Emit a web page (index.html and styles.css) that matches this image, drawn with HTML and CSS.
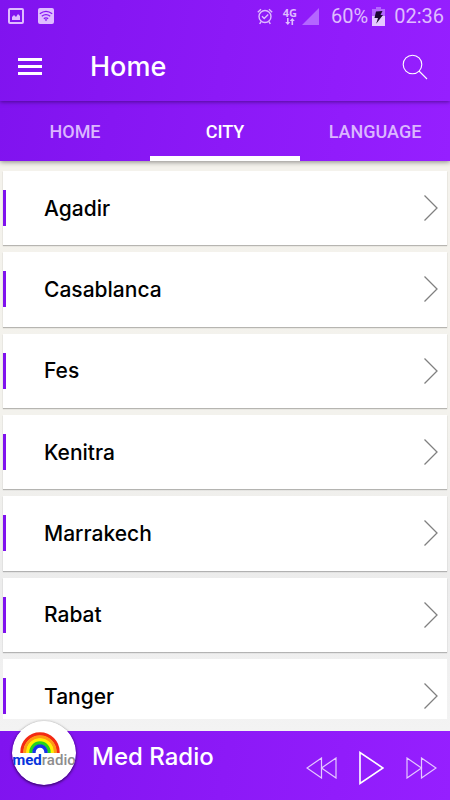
FILE: index.html
```html
<!DOCTYPE html>
<html lang="en">
<head>
<meta charset="utf-8">
<meta name="viewport" content="width=device-width, initial-scale=1">
<title>Home</title>
<link rel="stylesheet" href="styles.css">
</head>
<body>
<div class="app">
  <header class="top">
    <div class="status">
      <svg width="16" height="16" viewBox="0 0 16 16"><rect x="1" y="1" width="14" height="14" rx="1" fill="none" stroke="currentColor" stroke-width="2"/><path d="M4 12V9l2-2 2 2 2-3 2 2v4z" fill="currentColor"/></svg>
      <svg class="wifi" width="16" height="16" viewBox="0 0 16 16"><rect width="16" height="16" rx="2" fill="currentColor"/><g fill="none" stroke="#8717f5" stroke-width="1.3"><path d="M1.8 5.8Q8 1 14.2 5.8M3.8 8.3Q8 5 12.2 8.3M5.8 10.6Q8 9 10.2 10.6"/></g><path d="M6.7 11.6Q8 10.8 9.3 11.6L8 13.3z" fill="#8717f5"/></svg>
      <svg class="alarm" width="16" height="17" viewBox="0 0 16 17" fill="none" stroke="currentColor" stroke-width="1.4"><circle cx="8" cy="8.5" r="6"/><path d="M5 8.3l2.2 2.2 4-4M.8 4.2L4 1.3M15.2 4.2L12 1.3M4 13.6L2.7 16M12 13.6l1.3 2.4"/></svg>
      <span class="network"><span>4G</span><svg width="10" height="7" viewBox="0 0 10 7" fill="currentColor"><path d="M2 0h1.6v4H5.3L2.8 7 .2 4H2zM6.5 7h1.6V3h1.7L7.3 0 4.7 3h1.8z"/></svg></span>
      <svg class="signal" width="17" height="17" viewBox="0 0 17 17"><path d="M17 0v17H0z" fill="#b466ff"/></svg>
      <span class="percent">60%</span>
      <svg class="battery" width="13" height="19" viewBox="0 0 13 19"><path d="M4 0h5v2h4v7H0V2h4z" fill="#b466ff"/><path d="M0 9h13v10H0z" fill="#e5caff"/><path d="M4 4.5l6.5-.5-2 4H11l-6.8 8.8L6 11H2.5z" fill="#1c0832"/></svg>
      <span class="clock">02:36</span>
    </div>
    <div class="toolbar">
      <button class="icon-btn" aria-label="Menu"><svg width="24" height="18" viewBox="0 0 24 18" fill="currentColor"><path d="M0 0h24v3H0zM0 7h24v3H0zM0 14h24v3H0z"/></svg></button>
      <h1 class="title">Home</h1>
      <button class="icon-btn" aria-label="Search"><svg width="26" height="26" viewBox="0 0 26 26" fill="none" stroke="currentColor" stroke-width="1.1"><circle cx="10.5" cy="10.5" r="9.3"/><path d="M17 17l8 8"/></svg></button>
    </div>
  </header>
  <nav class="tabs">
    <a class="tab" href="#home">HOME</a>
    <a class="tab active" href="#city" aria-current="page">CITY</a>
    <a class="tab" href="#language">LANGUAGE</a>
  </nav>
  <main class="content">
    <ul class="cities">
      <li class="card"><a class="city" href="#agadir">Agadir<svg class="chevron" viewBox="0 0 14 26"><path d="M.5.5L13 13 .5 25.5"/></svg></a></li>
      <li class="card"><a class="city" href="#casablanca">Casablanca<svg class="chevron" viewBox="0 0 14 26"><path d="M.5.5L13 13 .5 25.5"/></svg></a></li>
      <li class="card"><a class="city" href="#fes">Fes<svg class="chevron" viewBox="0 0 14 26"><path d="M.5.5L13 13 .5 25.5"/></svg></a></li>
      <li class="card"><a class="city" href="#kenitra">Kenitra<svg class="chevron" viewBox="0 0 14 26"><path d="M.5.5L13 13 .5 25.5"/></svg></a></li>
      <li class="card"><a class="city" href="#marrakech">Marrakech<svg class="chevron" viewBox="0 0 14 26"><path d="M.5.5L13 13 .5 25.5"/></svg></a></li>
      <li class="card"><a class="city" href="#rabat">Rabat<svg class="chevron" viewBox="0 0 14 26"><path d="M.5.5L13 13 .5 25.5"/></svg></a></li>
      <li class="card"><a class="city" href="#tanger">Tanger<svg class="chevron" viewBox="0 0 14 26"><path d="M.5.5L13 13 .5 25.5"/></svg></a></li>
    </ul>
  </main>
  <footer class="player">
    <svg class="logo" width="64" height="64" viewBox="0 0 64 64" role="img" aria-label="Med Radio">
      <circle cx="32" cy="32" r="32" fill="#fff"/>
      <g fill="none" stroke-width="3.4">
        <path d="M10 32v-1a18 18 0 0 1 36 0v1" stroke="#f32a13"/>
        <path d="M13 32v-1a15 15 0 0 1 30 0v1" stroke="#ff9a12"/>
        <path d="M16 32v-1a12 12 0 0 1 24 0v1" stroke="#fff000"/>
        <path d="M19 32v-1a9 9 0 0 1 18 0v1" stroke="#20d51b"/>
        <path d="M22 32v-1a6 6 0 0 1 12 0v1" stroke="#1733e8"/>
      </g>
      <text class="logo-text" x="32" y="44" text-anchor="middle"><tspan fill="#0734dc">med</tspan><tspan class="logo-radio" fill="#8d8d8d">radio</tspan></text>
    </svg>
    <h2 class="station">Med Radio</h2>
    <div class="controls">
      <button class="icon-btn" aria-label="Previous"><svg width="31" height="22" viewBox="0 0 31 22"><path d="M15.5 1v20L1 11zM30 1v20L15.5 11z"/></svg></button>
      <button class="icon-btn" aria-label="Play"><svg class="play" width="25" height="34" viewBox="0 0 25 34"><path d="M1 1.5v31L24 17z"/></svg></button>
      <button class="icon-btn" aria-label="Next"><svg width="31" height="22" viewBox="0 0 31 22"><path d="M1 1v20l14.500-10zM15.500 1v20L30 11z"/></svg></button>
    </div>
  </footer>
</div>
</body>
</html>
```
FILE: styles.css
```css
* {
  box-sizing: border-box;
}

body {
  margin: 0;
  font-family: Inter, "Open Sans", sans-serif;
  background: #f3f3f3;
}

.app {
  display: flex;
  flex-direction: column;
  height: 100vh;
}

.top,
.tabs,
.player {
  background: linear-gradient(100deg, #8013ef, #8c19f7 50%, #961fff);
  color: #fff;
}

.top {
  position: relative;
  z-index: 2;
  box-shadow: 0 1px 4px rgba(40, 0, 80, 0.6);
}

.status {
  display: flex;
  align-items: center;
  height: 32px;
  padding: 0 6px 0 8px;
  color: #dfbcff;
  font-family: Roboto, sans-serif;
  font-size: 20px;
}

.wifi {
  margin-left: 14px;
}

.alarm {
  margin-left: auto;
}

.network {
  display: flex;
  flex-direction: column;
  align-items: center;
  margin-left: 10px;
  font: 700 11px/10px "Noto Sans", sans-serif;
}

.signal {
  margin-left: 5px;
}

.percent {
  margin-left: 12px;
}

.battery {
  margin: 0 9px 0 4px;
}

.toolbar {
  display: flex;
  align-items: center;
  height: 69px;
  padding: 0 22px 0 18px;
}

.icon-btn {
  display: flex;
  padding: 0;
  border: 0;
  background: none;
  color: inherit;
}

.title {
  flex: 1;
  margin: 0 0 0 48px;
  font-size: 27px;
  font-weight: 500;
}

.tabs {
  display: grid;
  grid-template-columns: repeat(3, 1fr);
  position: relative;
  z-index: 1;
  height: 60px;
  box-shadow: 0 1px 5px rgba(0, 0, 0, 0.45);
}

.tab {
  display: flex;
  align-items: center;
  justify-content: center;
  padding-top: 6px;
  border-bottom: 5px solid transparent;
  color: #dbb6ff;
  font: 500 18px/24px Roboto, sans-serif;
  text-decoration: none;
}

.tab.active {
  border-color: #fff;
  color: #fff;
}

.content {
  display: flex;
  flex: 1;
  min-height: 0;
  padding: 10px 3px 12px;
  background: linear-gradient(#f4f2ec, #f3f2ed 45%, #ececec 75%, #f3f3f3);
}

.cities {
  display: grid;
  flex: 1;
  grid-template-rows: repeat(6, 1fr) 60px;
  gap: 7px;
  margin: 0;
  padding: 0;
  list-style: none;
}

.card {
  padding-top: 19px;
  background: #fff;
  box-shadow: 0 1px 1px rgba(0, 0, 0, 0.25);
}

.card:last-child {
  box-shadow: none;
}

.city {
  display: flex;
  align-items: center;
  justify-content: space-between;
  height: 36px;
  padding: 0 9px 0 38px;
  border-left: 3px solid #7f12ee;
  color: #000;
  font-size: 21px;
  font-weight: 500;
  text-decoration: none;
}

.chevron {
  width: 14px;
  height: 26px;
  fill: none;
  stroke: #808080;
  stroke-width: 1.3;
}

.player {
  display: flex;
  height: 69px;
  padding: 0 13px 0 12px;
}

.logo {
  flex: none;
  margin-top: -10px;
  border-radius: 50%;
  box-shadow: 0 1px 3px rgba(0, 0, 0, 0.7);
}

.logo-text {
  font: 700 15px Roboto, sans-serif;
}

.logo-radio {
  font-weight: 500;
}

.station {
  flex: 1;
  margin: 11px 0 0 16px;
  font-size: 24px;
  font-weight: 500;
  line-height: 30px;
}

.controls {
  display: flex;
  align-items: center;
  gap: 22px;
  padding-top: 4px;
  fill: none;
  stroke: #e5c8ff;
  stroke-width: 1.2;
}

.play {
  stroke: #fff;
  stroke-width: 1.6;
}
```
